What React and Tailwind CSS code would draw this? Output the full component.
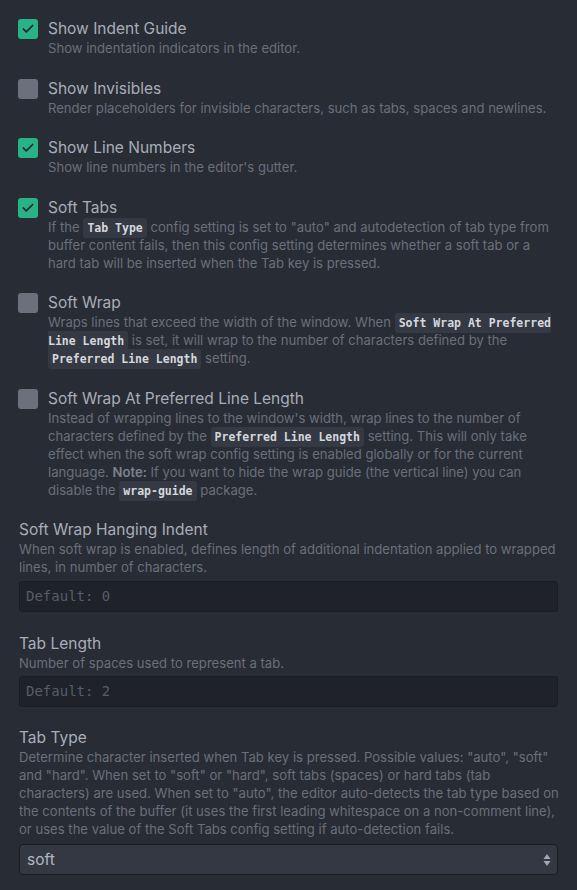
import { Check } from 'lucide-react'

const SANS = { fontFamily: 'Inter, "Noto Sans", sans-serif' }

function Code({ children }) {
  return (
    <code className="rounded-[3px] bg-[#343943] px-[4px] py-[3px] font-['DejaVu_Sans_Mono',monospace] text-[11.5px] leading-none font-bold text-[#d4d8de]">
      {children}
    </code>
  )
}

function CheckItem({ checked, title, children }) {
  return (
    <div className="flex gap-[10px]">
      <span
        className={`flex h-5 w-5 shrink-0 items-center justify-center rounded-[3px] ${
          checked ? 'bg-[#27b386]' : 'bg-[#6c707c]'
        }`}
      >
        {checked && <Check size={14} strokeWidth={3} className="text-[#23262d]" />}
      </span>
      <div className="min-w-0 flex-1">
        <div className="text-[15.5px] leading-5 text-[#a8aeb9]">{title}</div>
        <div className="text-[13.1px] leading-[18px] text-[#6a707b]">{children}</div>
      </div>
    </div>
  )
}

function Field({ title, children }) {
  return (
    <div>
      <div className="text-[15.5px] leading-5 text-[#a8aeb9]">{title}</div>
      <div className="-mr-[3px] text-[13.1px] leading-[18px] text-[#6a707b]">{children}</div>
    </div>
  )
}

function NumberInput({ placeholder }) {
  return (
    <div className="flex h-[31px] items-center rounded-[3px] border border-[#1b1d22] bg-[#1f2228] pl-[6px] font-['DejaVu_Sans_Mono',monospace] text-[14px] text-[#575d67]">
      {placeholder}
    </div>
  )
}

export default function App() {
  return (
    <div className="min-h-screen bg-[#282c34] pl-[18px] pr-[19px] pt-[19px] pb-6" style={SANS}>
      <div className="flex flex-col gap-[21.5px]">
        <CheckItem checked title="Show Indent Guide">
          Show indentation indicators in the editor.
        </CheckItem>
        <CheckItem title="Show Invisibles">
          Render placeholders for invisible characters, such as tabs, spaces and newlines.
        </CheckItem>
        <CheckItem checked title="Show Line Numbers">
          Show line numbers in the editor's gutter.
        </CheckItem>
        <CheckItem checked title="Soft Tabs">
          If the <Code>Tab Type</Code> config setting is set to "auto" and autodetection of tab type from
          buffer content fails, then this config setting determines whether a soft tab or a hard tab will
          be inserted when the Tab key is pressed.
        </CheckItem>
        <CheckItem title="Soft Wrap">
          Wraps lines that exceed the width of the window. When <Code>Soft Wrap At Preferred Line Length</Code>{' '}
          is set, it will wrap to the number of characters defined by the <Code>Preferred Line Length</Code>{' '}
          setting.
        </CheckItem>
        <CheckItem title="Soft Wrap At Preferred Line Length">
          Instead of wrapping lines to the window's width, wrap lines to the number of characters defined by
          the <Code>Preferred Line Length</Code> setting. This will only take effect when the soft wrap config
          setting is enabled globally or for the current language.{' '}
          <strong className="font-semibold text-[#7c828d]">Note:</strong> If you want to hide the wrap guide
          (the vertical line) you can disable the <Code>wrap-guide</Code> package.
        </CheckItem>

        <div className="pl-px">
          <Field title="Soft Wrap Hanging Indent">
            When soft wrap is enabled, defines length of additional indentation applied to wrapped lines, in
            number of characters.
          </Field>
          <div className="mt-[5px]">
            <NumberInput placeholder="Default: 0" />
          </div>
        </div>

        <div className="pl-px">
          <Field title="Tab Length">Number of spaces used to represent a tab.</Field>
          <div className="mt-[4px]">
            <NumberInput placeholder="Default: 2" />
          </div>
        </div>

        <div className="pl-px">
          <Field title="Tab Type">
            Determine character inserted when Tab key is pressed. Possible values: "auto", "soft" and "hard".
            When set to "soft" or "hard", soft tabs (spaces) or hard tabs (tab characters) are used. When set
            to "auto", the editor auto-detects the tab type based on the contents of the buffer (it uses the
            first leading whitespace on a non-comment line), or uses the value of the Soft Tabs config setting
            if auto-detection fails.
          </Field>
          <div className="mt-[6px] flex h-[31px] items-center justify-between rounded-[4px] border border-[#1a1c21] bg-[#333842] pl-[7px] pr-[6px]">
            <span className="text-[15.5px] text-[#b2b8c2]">soft</span>
            <svg width="8" height="14" viewBox="0 0 8 14" className="text-[#a3a9b4]">
              <path d="M4 1 L7.5 6 H0.5 Z" fill="currentColor" />
              <path d="M4 13 L7.5 8 H0.5 Z" fill="currentColor" />
            </svg>
          </div>
        </div>
      </div>
    </div>
  )
}
